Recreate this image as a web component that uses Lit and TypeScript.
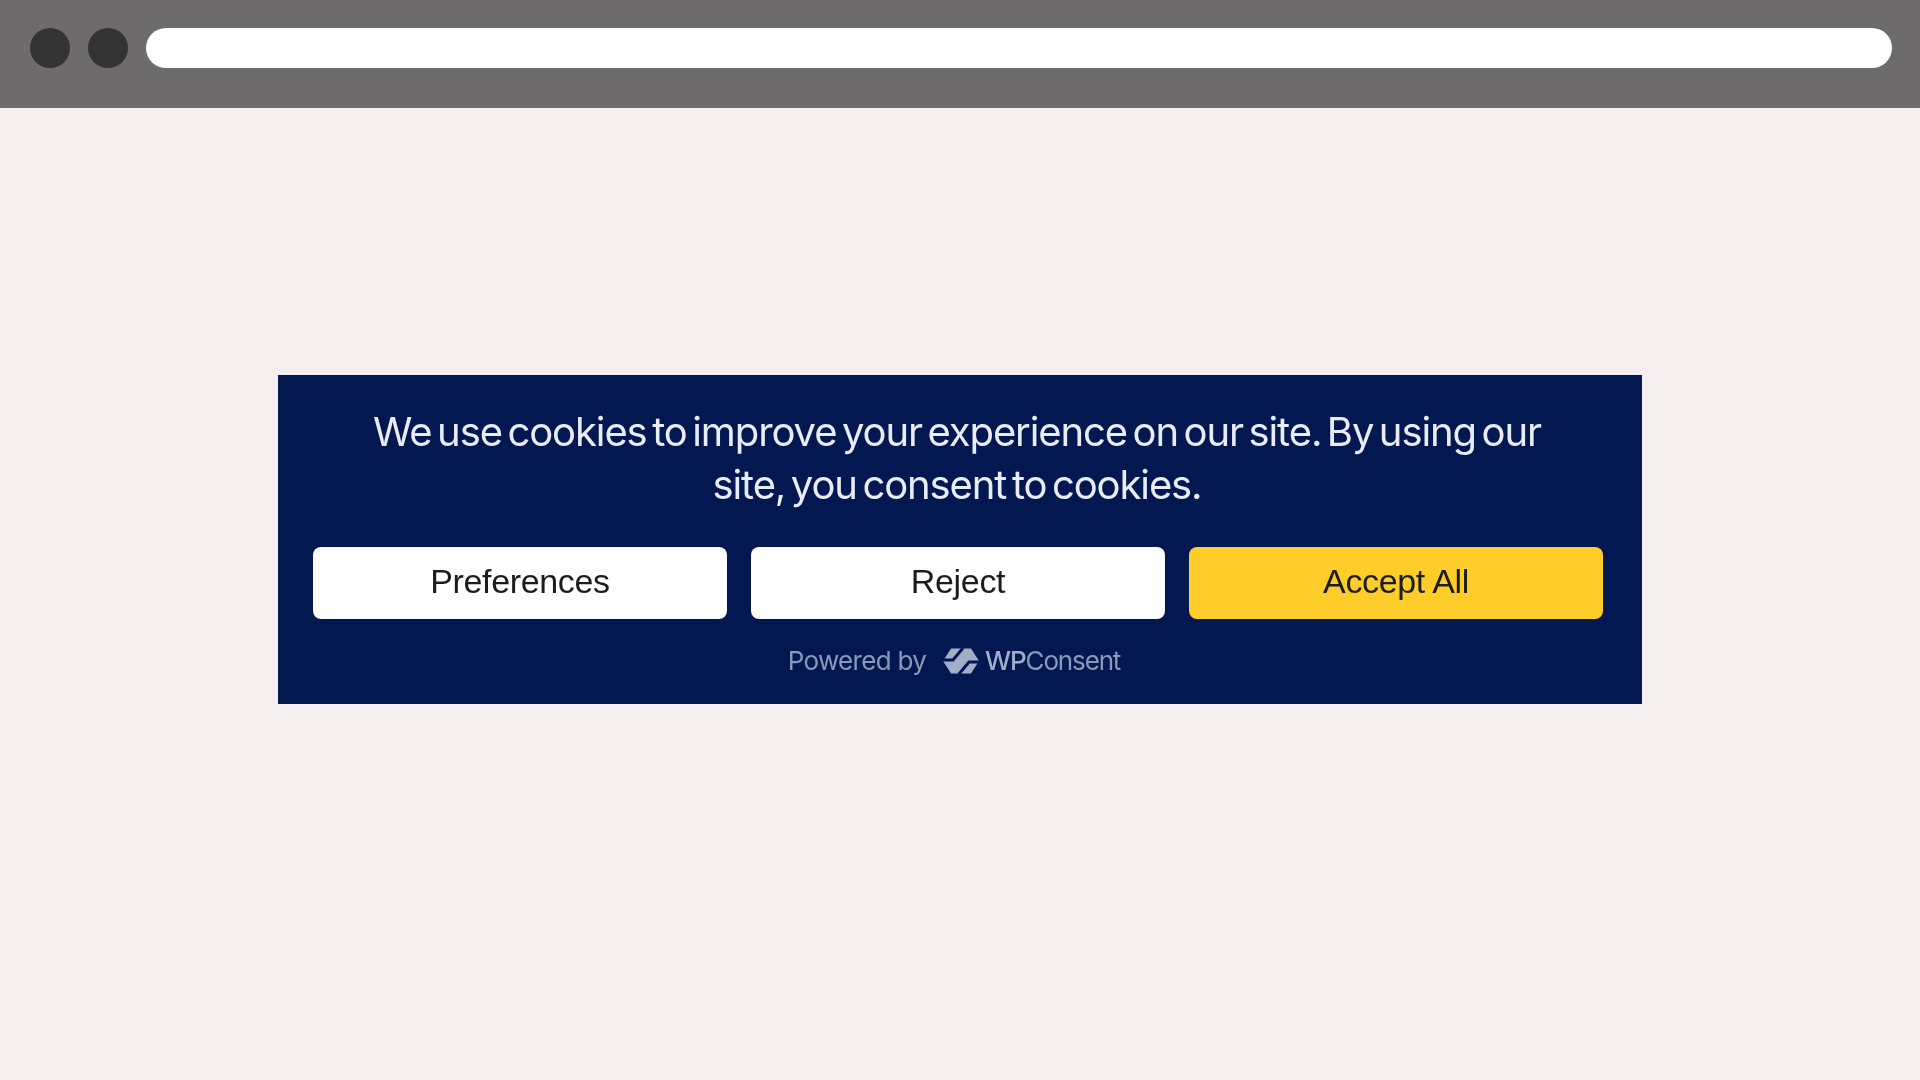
import { LitElement, html, css } from "lit";
import { customElement } from "lit/decorators.js";

@customElement("app-root")
export class AppRoot extends LitElement {
  static styles = css`
    :host { display: block; width: 1920px; height: 1080px; background: #f4eeee; overflow: hidden; }
    .chrome { height: 108px; box-sizing: border-box; background: #6d6b6c; padding: 28px 28px 40px 30px; display: flex; gap: 18px; }
    .dot { width: 40px; height: 40px; border-radius: 50%; background: #333333; flex: none; }
    .url { flex: 1; height: 40px; border-radius: 20px; background: #ffffff; }
    .main { display: flex; justify-content: center; padding-top: 267px; }
    .banner { width: 1364px; height: 329px; box-sizing: border-box; background: #031851; padding: 30px 39px 0 35px; display: flex; flex-direction: column; }
    .msg { margin: 0; padding: 0 60px 0 58px; text-align: center; font: 400 40px/53px Inter, "Liberation Sans", sans-serif; letter-spacing: -1.1px; word-spacing: -4.6px; color: #e8ecf4; filter: blur(0.5px); }
    .buttons { display: grid; grid-template-columns: repeat(3, 1fr); gap: 24px; margin-top: 36px; }
    .btn { height: 72px; border: 0; border-radius: 8px; background: #ffffff; color: #1c1c1c; font: 400 34px "Liberation Sans", Arial, sans-serif; letter-spacing: -0.35px; padding: 0 0 3px; }
    .btn.primary { background: #ffcd29; }
    .label { display: block; filter: blur(0.5px); }
    .footer { display: flex; justify-content: center; align-items: center; margin-top: 26px; padding-right: 8px; color: #8c98b8; font: 400 26px/32px Inter, "Liberation Sans", sans-serif; letter-spacing: -0.7px; filter: blur(0.6px); }
    .logo { width: 36px; height: 26px; margin: 0 6px 0 17px; flex: none; }
    .brand { letter-spacing: -1.15px; }
    .brand b { font-weight: 500; color: #a3adc8; }
  `;

  render() {
    return html`
      <div class="chrome">
        <div class="dot"></div>
        <div class="dot"></div>
        <div class="url"></div>
      </div>
      <div class="main">
        <section class="banner">
          <p class="msg">We use cookies to improve your experience on our site. By using our site, you consent to cookies.</p>
          <div class="buttons">
            <button class="btn"><span class="label">Preferences</span></button>
            <button class="btn"><span class="label">Reject</span></button>
            <button class="btn primary"><span class="label">Accept All</span></button>
          </div>
          <div class="footer">
            <span>Powered by</span>
            <svg class="logo" viewBox="0 0 36 26">
              <path d="M8 0.5H28L36 13L28 25.5H8L0 13Z" fill="#a3adc8"/>
              <path d="M20 0L10 12H0M16 26L26 14H36" fill="none" stroke="#031851" stroke-width="3"/>
            </svg>
            <span class="brand"><b>WP</b>Consent</span>
          </div>
        </section>
      </div>
    `;
  }
}
